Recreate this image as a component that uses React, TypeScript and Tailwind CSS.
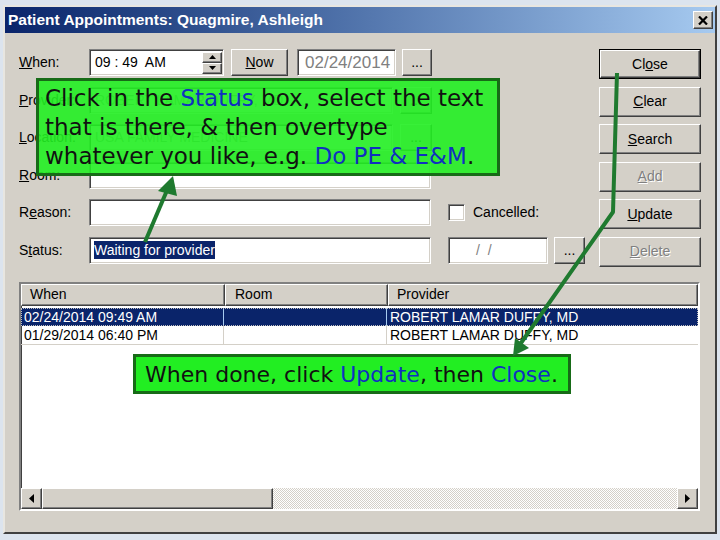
import React from 'react';

const sunken =
  'border border-t-[#808080] border-l-[#808080] border-b-white border-r-white shadow-[inset_1px_1px_0_#404040,inset_-1px_-1px_0_#d4d0c8]';
const raised =
  'border border-t-white border-l-white border-b-[#404040] border-r-[#404040] shadow-[inset_-1px_-1px_0_#808080,inset_1px_1px_0_#d4d0c8]';
const disabledText = 'text-[#808080] [text-shadow:1px_1px_0_#ffffff]';

function Btn({ className = '', children }: { className?: string; children: React.ReactNode }) {
  return (
    <div className={`${raised} bg-[#d4d0c8] flex items-center justify-center text-[14px] ${className}`}>
      {children}
    </div>
  );
}

function Label({ children }: { children: React.ReactNode }) {
  return <div className="w-[70px] shrink-0 text-[14px] text-black">{children}</div>;
}

function Spinner() {
  return (
    <div className="w-[20px] h-[22px] mr-[1px] flex flex-col">
      <div className={`${raised} bg-[#d4d0c8] flex-1 flex items-center justify-center`}>
        <svg width="7" height="4" viewBox="0 0 7 4">
          <polygon points="3.5,0 7,4 0,4" fill="#000" />
        </svg>
      </div>
      <div className={`${raised} bg-[#d4d0c8] flex-1 flex items-center justify-center`}>
        <svg width="7" height="4" viewBox="0 0 7 4">
          <polygon points="0,0 7,0 3.5,4" fill="#000" />
        </svg>
      </div>
    </div>
  );
}

function Arrow({ dir }: { dir: 'left' | 'right' }) {
  return (
    <div className={`${raised} bg-[#d4d0c8] w-[21px] h-full flex items-center justify-center`}>
      <svg width="5" height="9" viewBox="0 0 5 9">
        {dir === 'left' ? (
          <polygon points="5,0 5,9 0,4.5" fill="#000" />
        ) : (
          <polygon points="0,0 0,9 5,4.5" fill="#000" />
        )}
      </svg>
    </div>
  );
}

const rightButtons = [
  { label: 'Close', idx: 2, disabled: false, def: true },
  { label: 'Clear', idx: 0, disabled: false },
  { label: 'Search', idx: 0, disabled: false },
  { label: 'Add', idx: 0, disabled: true },
  { label: 'Update', idx: 0, disabled: false },
  { label: 'Delete', idx: 0, disabled: true },
];

export default function App() {
  return (
    <div className="relative w-[720px] h-[540px] overflow-hidden bg-[#dce4ee] pt-[5px] pl-[3px] font-['Liberation_Sans',Arial,sans-serif] text-black">
      {/* Window */}
      <div className="w-[714px] h-[529px] flex flex-col bg-[#d4d0c8] border-2 border-t-[#e8e6e0] border-l-[#e8e6e0] border-b-[#404040] border-r-[#404040]">
        {/* Title bar */}
        <div className="h-[26px] shrink-0 flex items-center justify-between bg-linear-to-r from-[#0a246a] to-[#a6caf0] pl-[3px] pr-[2px]">
          <span className="text-white font-bold text-[15.5px]">Patient Appointments: Quagmire, Ashleigh</span>
          <div className={`${raised} bg-[#d4d0c8] w-[20px] h-[18px] flex items-center justify-center`}>
            <svg width="10" height="9" viewBox="0 0 10 9">
              <path d="M1 0.5 L9 8.5 M9 0.5 L1 8.5" stroke="#000" strokeWidth="2.2" />
            </svg>
          </div>
        </div>

        {/* Body */}
        <div className="flex-1 flex flex-col pt-[16px] pl-[14px] pr-[14px]">
          <div className="flex justify-between">
            {/* Form fields */}
            <div className="flex flex-col gap-[10.6px]">
              <div className="flex items-center h-[27px]">
                <Label>
                  <span className="underline">W</span>hen:
                </Label>
                <div className={`${sunken} bg-white w-[135px] h-[27px] flex items-center pl-[5px]`}>
                  <span className="flex-1 text-[14px] whitespace-pre">09 : 49  AM</span>
                  <Spinner />
                </div>
                <Btn className="ml-[7px] w-[57px] h-[27px]">
                  <span className="underline">N</span>ow
                </Btn>
                <div className={`${sunken} bg-white ml-[9px] w-[99px] h-[27px] flex items-center pl-[7px] text-[17px] text-[#808080]`}>
                  02/24/2014
                </div>
                <Btn className="ml-[6px] w-[30px] h-[27px]">...</Btn>
              </div>

              <div className="flex items-center h-[27px]">
                <Label>
                  <span className="underline">P</span>rovider:
                </Label>
                <div className={`${sunken} bg-white w-[304px] h-[27px] flex items-center pl-[5px] text-[14px] text-[#9a9a9a]`}>
                  ROBERT LAMAR DUFFY, MD
                </div>
                <Btn className="ml-[7px] w-[32px] h-[27px]">...</Btn>
              </div>

              <div className="flex items-center h-[27px]">
                <Label>
                  <span className="underline">L</span>ocation:
                </Label>
                <div className={`${sunken} bg-white w-[304px] h-[27px] flex items-center pl-[5px] text-[14px] text-[#9a9a9a]`}>
                  USA FAMILY MEDICINE
                </div>
                <Btn className="ml-[7px] w-[32px] h-[27px]">...</Btn>
              </div>

              <div className="flex items-center h-[27px]">
                <Label>
                  <span className="underline">R</span>oom:
                </Label>
                <div className={`${sunken} bg-white w-[342px] h-[27px]`} />
              </div>

              <div className="flex items-center h-[27px]">
                <Label>
                  R<span className="underline">e</span>ason:
                </Label>
                <div className={`${sunken} bg-white w-[342px] h-[27px]`} />
                <div className={`${sunken} bg-white ml-[17px] w-[17px] h-[17px]`} />
                <span className="ml-[8px] text-[14px]">Cancelled:</span>
              </div>

              <div className="flex items-center h-[27px]">
                <Label>
                  S<span className="underline">t</span>atus:
                </Label>
                <div className={`${sunken} bg-white w-[342px] h-[27px] flex items-center pl-[4px]`}>
                  <span className="bg-[#0a246a] text-white text-[14px] leading-[18px]">Waiting for provider</span>
                </div>
                <div className={`${sunken} bg-white ml-[17px] w-[100px] h-[27px] flex items-center pl-[27px] text-[14px] text-[#808080] whitespace-pre`}>
                  /  /
                </div>
                <Btn className="ml-[6px] w-[31px] h-[27px]">...</Btn>
              </div>
            </div>

            {/* Right buttons */}
            <div className="flex flex-col gap-[7.6px] w-[102px]">
              {rightButtons.map((b) => (
                <div key={b.label} className={b.def ? 'border border-black' : ''}>
                  <Btn className={`${b.def ? 'h-[28px]' : 'h-[30px]'} ${b.disabled ? disabledText : ''}`}>
                    {b.label.slice(0, b.idx)}
                    <span className="underline">{b.label.charAt(b.idx)}</span>
                    {b.label.slice(b.idx + 1)}
                  </Btn>
                </div>
              ))}
            </div>
          </div>

          {/* List view */}
          <div className="mt-[15px] w-[681px] h-[229px] flex flex-col border-2 border-t-[#808080] border-l-[#808080] border-b-white border-r-white bg-white shadow-[inset_1px_1px_0_#404040]">
            <div className="flex h-[22px] shrink-0 text-[14px]">
              <div className={`${raised} bg-[#d4d0c8] w-[204px] pl-[8px] flex items-center`}>When</div>
              <div className={`${raised} bg-[#d4d0c8] w-[163px] pl-[9px] flex items-center`}>Room</div>
              <div className={`${raised} bg-[#d4d0c8] flex-1 pl-[8px] flex items-center`}>Provider</div>
            </div>
            <div className="flex-1 pt-[2px] text-[14px]">
              <div className="flex h-[18px] bg-[#0a246a] text-white outline-1 outline-dotted outline-[#c0c0c0] -outline-offset-1 leading-[18px]">
                <div className="w-[203px] pl-[3px] border-r border-[#a6caf0]">02/24/2014 09:49 AM</div>
                <div className="w-[163px] border-r border-[#a6caf0]" />
                <div className="flex-1 pl-[3px]">ROBERT LAMAR DUFFY, MD</div>
              </div>
              <div className="flex h-[19px] border-b border-[#d4d0c8] leading-[18px]">
                <div className="w-[203px] pl-[3px] border-r border-[#d4d0c8]">01/29/2014 06:40 PM</div>
                <div className="w-[163px] border-r border-[#d4d0c8]" />
                <div className="flex-1 pl-[3px]">ROBERT LAMAR DUFFY, MD</div>
              </div>
            </div>
            <div className="flex h-[21px] shrink-0">
              <Arrow dir="left" />
              <div className={`${raised} bg-[#d4d0c8] w-[231px] h-full`} />
              <div className="flex-1 h-full bg-[image:repeating-conic-gradient(#d4d0c8_0%_25%,#ffffff_0%_50%)] bg-[length:2px_2px]" />
              <Arrow dir="right" />
            </div>
          </div>
        </div>
      </div>

      {/* Callout 1 */}
      <div className="absolute left-[36px] top-[78px] w-[464px] h-[98px] border-[3px] border-[#176b17] bg-[#22ee22]/[0.9] pl-[6px] pt-[3px] text-[23px] leading-[29px] font-['DejaVu_Sans',sans-serif] text-[#111] whitespace-nowrap">
        <div>
          Click in the <span className="text-[#1030c0]">Status</span> box, select the text
        </div>
        <div>that is there, &amp; then overtype</div>
        <div>
          whatever you like, e.g. <span className="text-[#1030c0]">Do PE &amp; E&amp;M</span>.
        </div>
      </div>

      {/* Callout 2 */}
      <div className="absolute left-[133px] top-[354px] w-[438px] h-[40px] border-[3px] border-[#176b17] bg-[#22ee22] pl-[9px] flex items-center text-[22px] font-['DejaVu_Sans',sans-serif] text-[#111] whitespace-nowrap">
        When done, click&nbsp;<span className="text-[#1030c0]">Update</span>, then&nbsp;
        <span className="text-[#1030c0]">Close</span>.
      </div>

      {/* Arrows */}
      <svg className="absolute left-0 top-0 pointer-events-none" width="720" height="540" viewBox="0 0 720 540">
        <line x1="145" y1="242" x2="168" y2="188" stroke="#1f7a2f" strokeWidth="4" />
        <polygon points="173,176 158,191 177,196" fill="#1f7a2f" />
        <polyline points="617,73 613,212 521,343" fill="none" stroke="#1f7a2f" strokeWidth="4" strokeLinejoin="round" />
        <polygon points="513,356 529,348 515,338" fill="#1f7a2f" />
      </svg>
    </div>
  );
}
